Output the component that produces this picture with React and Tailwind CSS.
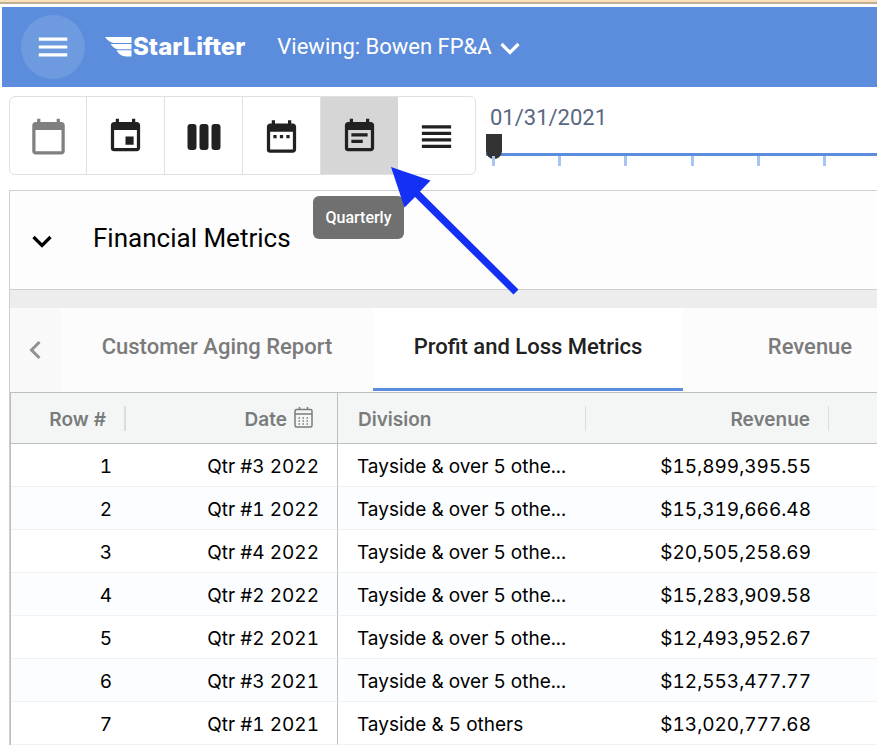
import React from "react";
import { MdMenu, MdCalendarToday, MdEvent, MdDateRange, MdEventNote, MdReorder } from "react-icons/md";

const ROWS = [
  ["Qtr #3 2022", "Tayside & over 5 othe...", "$15,899,395.55"],
  ["Qtr #1 2022", "Tayside & over 5 othe...", "$15,319,666.48"],
  ["Qtr #4 2022", "Tayside & over 5 othe...", "$20,505,258.69"],
  ["Qtr #2 2022", "Tayside & over 5 othe...", "$15,283,909.58"],
  ["Qtr #2 2021", "Tayside & over 5 othe...", "$12,493,952.67"],
  ["Qtr #3 2021", "Tayside & over 5 othe...", "$12,553,477.77"],
  ["Qtr #1 2021", "Tayside & 5 others", "$13,020,777.68"],
];

function ColumnsIcon() {
  return (
    <svg width="34" height="26" viewBox="0 0 34 26" fill="currentColor" aria-hidden="true">
      <rect x="0.500" y="0" width="9" height="26" rx="3" />
      <rect x="12.500" y="0" width="9" height="26" rx="3" />
      <rect x="24.500" y="0" width="9" height="26" rx="3" />
    </svg>
  );
}

function Chevron() {
  return (
    <svg width="20" height="14" viewBox="0 0 20 14" fill="none" stroke="currentColor" strokeWidth="3.2" aria-hidden="true">
      <path d="M1.5 2L10 10.500L18.500 2" />
    </svg>
  );
}

function WingLogo() {
  return (
    <svg width="27" height="20" viewBox="0 0 27 20" fill="#fff" aria-hidden="true">
      <path d="M0 0H26.500V6H8.500Q3.500 5 0 0Z" />
      <path d="M5.500 7H26.500V12.300H13Q8.500 11.500 5.500 7Z" />
      <path d="M11.500 13.300H26.500V19.500H21Q14.500 19 11.500 13.300Z" />
    </svg>
  );
}

function SmallCalendar() {
  return (
    <svg width="19" height="22" viewBox="0 0 19 22" fill="none" stroke="currentColor" aria-hidden="true">
      <rect x="1" y="2.500" width="17" height="17.500" rx="1.500" strokeWidth="1.500" />
      <path d="M1 7H18M5.500 0V3M13.500 0V3" strokeWidth="1.500" />
      <path d="M4.500 11H15M4.500 14H15M4.500 17H15" strokeWidth="1.300" strokeDasharray="1.500 2.500" />
    </svg>
  );
}

function Pointer() {
  return (
    <svg width="130" height="130" viewBox="390 166 130 130" fill="#1430f5" className="pointer-events-none absolute top-[69px] left-[69px] z-20" aria-hidden="true">
      <path d="M391 167L430.500 180.500L420 191.500L518.500 289.500L513.500 294.500L415 197L404.500 207.500Z" />
    </svg>
  );
}

const tool = "flex h-full items-center justify-center border-r border-[#e0e0e0] pt-[2px]";

function Toolbar() {
  return (
    <div className="flex h-[79px] w-[467px] shrink-0 rounded-md border border-[#e0e0e0] text-[#212121]">
      <button aria-label="Yearly" className={tool + " w-[77px] text-[#808080]"}><MdCalendarToday size={39} /></button>
      <button aria-label="Daily" className={tool + " flex-1"}><MdEvent size={39} /></button>
      <button aria-label="Weekly" className={tool + " flex-1"}><ColumnsIcon /></button>
      <button aria-label="Monthly" className={tool + " flex-1"}><MdDateRange size={39} /></button>
      <div className="relative flex-1">
        <button aria-describedby="tip" aria-label="Quarterly" className="flex h-full w-full items-center justify-center bg-[#d6d6d6] pt-[2px]">
          <MdEventNote size={39} />
        </button>
        <div id="tip" role="tooltip" className="absolute top-[99px] -left-2 z-10 flex h-[43px] w-[91px] items-center justify-center rounded-md bg-[#707070] text-base font-medium text-white">
          Quarterly
        </div>
        <Pointer />
      </div>
      <button aria-label="List" className="flex h-full flex-1 items-center justify-center pt-[2px]"><MdReorder size={39} /></button>
    </div>
  );
}

function DateSlider() {
  return (
    <div className="min-w-0 flex-1 overflow-hidden pl-[10px]">
      <label htmlFor="date" className="mt-2 block h-7 pl-1 text-[22px] leading-7 text-[#5a6782]">01/31/2021</label>
      <input
        id="date"
        type="range"
        min="0"
        max="10"
        defaultValue="0"
        className="mt-[21px] block h-[3px] w-[683px] appearance-none bg-[#5c8ddc] [&::-webkit-slider-runnable-track]:h-[3px] [&::-webkit-slider-thumb]:-mt-[19px] [&::-webkit-slider-thumb]:h-[25px] [&::-webkit-slider-thumb]:w-4 [&::-webkit-slider-thumb]:appearance-none [&::-webkit-slider-thumb]:rounded-b-lg [&::-webkit-slider-thumb]:bg-[#333333]"
      />
      <div className="ml-[6px] flex h-[10px] w-[665px] justify-between">
        {Array.from({ length: 11 }, (_, i) => (
          <span key={i} className="h-full w-[3px] bg-[#a9c4f0]" />
        ))}
      </div>
    </div>
  );
}

const tab = "h-full shrink-0 pb-[6px] text-[22px] font-medium whitespace-nowrap";

export default function App() {
  return (
    <div className="min-h-screen overflow-hidden bg-white font-['Roboto',sans-serif]">
      <div className="h-1 border-b-2 border-[#c0b097] bg-[#fcdfbb]" />
      <header className="mt-[3px] ml-[2px] flex h-20 items-center bg-[#5c8ddc] pl-[19px] text-white">
        <button aria-label="Menu" className="flex size-16 items-center justify-center rounded-full bg-[#6e9ae0]">
          <MdMenu size={38} />
        </button>
        <div className="ml-5 flex items-center gap-px">
          <WingLogo />
          <span className="font-['Inter',sans-serif] text-2xl font-extrabold">StarLifter</span>
        </div>
        <div className="ml-8 flex items-center gap-2">
          <select aria-label="Viewing" className="appearance-none bg-transparent text-[22px] leading-8">
            <option>Viewing: Bowen FP&amp;A</option>
          </select>
          <span className="pt-1"><Chevron /></span>
        </div>
      </header>

      <div className="mt-[9px] ml-[9px] flex">
        <Toolbar />
        <DateSlider />
      </div>

      <main className="mt-[15px] ml-[9px] border-t border-l border-[#cfcfd1]">
        <div className="flex h-[99px] items-center border-b border-[#cfcfd1] bg-[#fdfdfd] pl-[22px]">
          <button aria-label="Collapse" className="pt-1 text-black"><Chevron /></button>
          <h2 className="ml-[41px] pb-1 text-[26px] leading-8 text-black">Financial Metrics</h2>
        </div>
        <div className="h-[18px] bg-[#ededed]" />
        <div className="flex h-[84px] overflow-hidden bg-[#fcfcfc]">
          <button aria-label="Previous tabs" className="flex w-[51px] shrink-0 items-center justify-center bg-[#f9f9f9] text-[#919191]">
            <svg width="14" height="18" viewBox="0 0 14 18" fill="none" stroke="currentColor" strokeWidth="3" aria-hidden="true">
              <path d="M10.500 1L2.500 9L10.500 17" />
            </svg>
          </button>
          <div role="tablist" className="flex h-full pb-px">
            <button role="tab" aria-selected="false" className={tab + " w-[312px] text-[#7b7b7b]"}>Customer Aging Report</button>
            <button role="tab" aria-selected="true" className={tab + " w-[310px] bg-white text-[#212121] shadow-[inset_0_-3px_0_#5c8ddc]"}>Profit and Loss Metrics</button>
            <button role="tab" aria-selected="false" className={tab + " w-[254px] text-[#7b7b7b]"}>Revenue</button>
          </div>
        </div>

        <table className="w-full min-w-[868px] table-fixed border-separate border-spacing-0 border-t border-l border-[#babfc4] font-['Inter',sans-serif] text-[19px] tabular-nums">
          <colgroup>
            <col className="w-[115px]" />
            <col className="w-[212px]" />
            <col className="w-[248px]" />
            <col className="w-[243px]" />
            <col />
          </colgroup>
          <thead>
            <tr className="h-[51px] bg-[#f4f6f6] text-[#7a7c7c] [&>th]:border-b [&>th]:border-[#babfc4] [&>th]:p-0 [&>th]:font-semibold">
              <th><div className="flex h-[25px] items-center justify-end border-r-2 border-[#dadcde] pt-1 pr-[18px]">Row #</div></th>
              <th className="border-r"><div className="flex h-[25px] items-center justify-end gap-[7px] pr-6"><span className="pt-1">Date</span><SmallCalendar /></div></th>
              <th><div className="flex h-[25px] items-center border-r border-[#dadcde] pt-1 pl-5">Division</div></th>
              <th><div className="flex h-[25px] items-center justify-end border-r border-[#dadcde] pt-1 pr-[18px]">Revenue</div></th>
              <th></th>
            </tr>
          </thead>
          <tbody className="text-black">
            {ROWS.map(([date, division, revenue], i) => (
              <tr key={date} className="h-[43px] even:bg-[#fcfdfe] [&>td]:border-b [&>td]:border-b-[#f0f2f3] [&>td]:pt-1 [&>td]:pb-0">
                <td className="pr-[14px] text-right">{i + 1}</td>
                <td className="border-r border-r-[#babfc4] pr-[18px] text-right">{date}</td>
                <td className="pl-[19px] whitespace-nowrap">{division}</td>
                <td className="pr-[18px] text-right">{revenue}</td>
                <td></td>
              </tr>
            ))}
          </tbody>
        </table>
      </main>
    </div>
  );
}
